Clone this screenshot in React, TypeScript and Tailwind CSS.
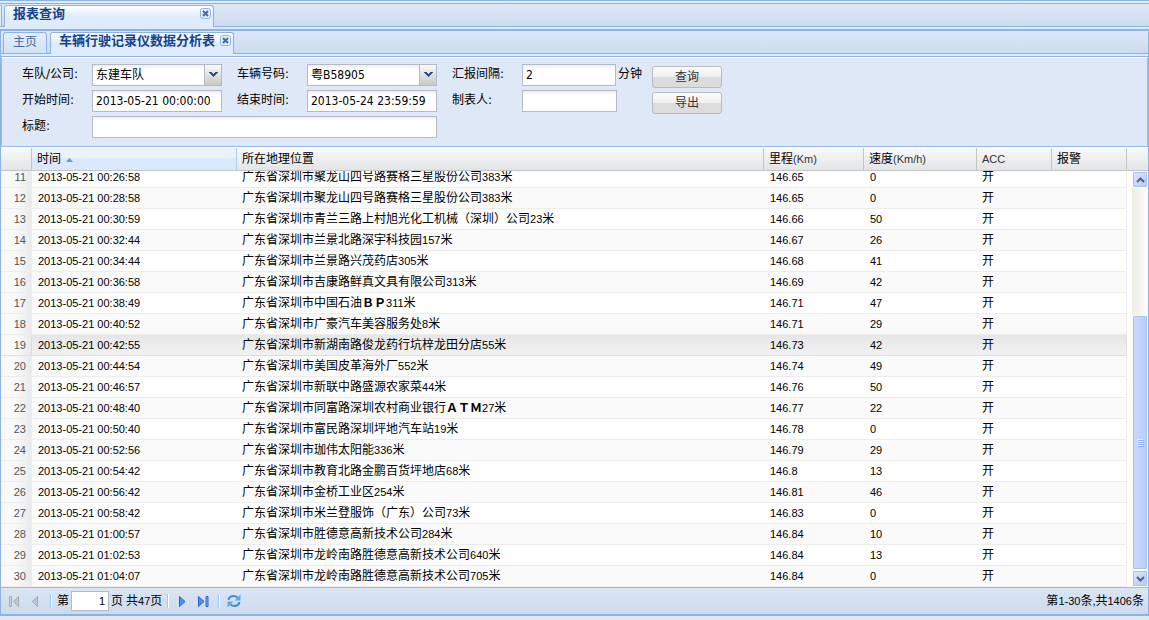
import { ReactNode } from "react";

type Row = { no: number; time: string; place: string; km: string; speed: number };

const DAY = "2013-05-21";

const rows: Row[] = [
  { no: 11, time: "00:26:58", place: "广东省深圳市聚龙山四号路赛格三星股份公司383米", km: "146.65", speed: 0 },
  { no: 12, time: "00:28:58", place: "广东省深圳市聚龙山四号路赛格三星股份公司383米", km: "146.65", speed: 0 },
  { no: 13, time: "00:30:59", place: "广东省深圳市青兰三路上村旭光化工机械（深圳）公司23米", km: "146.66", speed: 50 },
  { no: 14, time: "00:32:44", place: "广东省深圳市兰景北路深宇科技园157米", km: "146.67", speed: 26 },
  { no: 15, time: "00:34:44", place: "广东省深圳市兰景路兴茂药店305米", km: "146.68", speed: 41 },
  { no: 16, time: "00:36:58", place: "广东省深圳市吉康路鲜真文具有限公司313米", km: "146.69", speed: 42 },
  { no: 17, time: "00:38:49", place: "广东省深圳市中国石油ＢＰ311米", km: "146.71", speed: 47 },
  { no: 18, time: "00:40:52", place: "广东省深圳市广豪汽车美容服务处8米", km: "146.71", speed: 29 },
  { no: 19, time: "00:42:55", place: "广东省深圳市新湖南路俊龙药行坑梓龙田分店55米", km: "146.73", speed: 42 },
  { no: 20, time: "00:44:54", place: "广东省深圳市美国皮革海外厂552米", km: "146.74", speed: 49 },
  { no: 21, time: "00:46:57", place: "广东省深圳市新联中路盛源农家菜44米", km: "146.76", speed: 50 },
  { no: 22, time: "00:48:40", place: "广东省深圳市同富路深圳农村商业银行ＡＴＭ27米", km: "146.77", speed: 22 },
  { no: 23, time: "00:50:40", place: "广东省深圳市富民路深圳坪地汽车站19米", km: "146.78", speed: 0 },
  { no: 24, time: "00:52:56", place: "广东省深圳市珈伟太阳能336米", km: "146.79", speed: 29 },
  { no: 25, time: "00:54:42", place: "广东省深圳市教育北路金鹏百货坪地店68米", km: "146.8", speed: 13 },
  { no: 26, time: "00:56:42", place: "广东省深圳市金桥工业区254米", km: "146.81", speed: 46 },
  { no: 27, time: "00:58:42", place: "广东省深圳市米兰登服饰（广东）公司73米", km: "146.83", speed: 0 },
  { no: 28, time: "01:00:57", place: "广东省深圳市胜德意高新技术公司284米", km: "146.84", speed: 10 },
  { no: 29, time: "01:02:53", place: "广东省深圳市龙岭南路胜德意高新技术公司640米", km: "146.84", speed: 13 },
  { no: 30, time: "01:04:07", place: "广东省深圳市龙岭南路胜德意高新技术公司705米", km: "146.84", speed: 0 },
];

const HOVERED = 19;

const field =
  "h-[22px] border border-[#b5b8c8] bg-white bg-linear-to-b from-[#eceeee] to-white to-20% px-[3px] font-['DejaVu_Sans_Condensed','Noto_Sans_CJK_SC',sans-serif] text-[12px] text-black outline-none";

// Latin letters and digits are set one pixel smaller than the Chinese text
function Mixed({ text }: { text: string }) {
  return (
    <>
      {text.split(/([\x20-\x7e]+)/).map((part, i) =>
        i % 2 ? (
          <span key={i} className="text-[11px]">
            {part}
          </span>
        ) : (
          part.split(/([Ａ-Ｚ]+)/).map((p, j) => (j % 2 ? <b key={j}>{p}</b> : p))
        )
      )}
    </>
  );
}

function CloseIcon() {
  return (
    <svg viewBox="0 0 11 11" className="size-[11px]">
      <rect x="0.5" y="0.5" width="10" height="10" rx="2" fill="#e3eefb" stroke="#8fb3e3" />
      <path d="M3 3l5 5M8 3L3 8" stroke="#456a9f" strokeWidth="2" />
    </svg>
  );
}

function Combo({ id, value }: { id: string; value: string }) {
  return (
    <div className="relative">
      <select id={id} defaultValue={value} className={`${field} block w-full appearance-none`}>
        <option>{value}</option>
      </select>
      <span className="pointer-events-none absolute inset-y-0 right-0 flex w-[18px] items-center justify-center border border-[#b5b8c8] bg-linear-to-b from-[#fafafa] to-[#c8c8c8]">
        <svg viewBox="0 0 9 6" className="h-1.5 w-[9px]" shapeRendering="crispEdges">
          <path d="M0 0h3v1h1v1h1V1h1V0h3v1H8v1H7v1H6v1H5v1H4V4H3V3H2V2H1V1H0z" fill="#2d4f8e" />
        </svg>
      </span>
    </div>
  );
}

function Label({ id, indent, children }: { id: string; indent?: boolean; children: ReactNode }) {
  return (
    <label
      htmlFor={id}
      className={`pb-0.5 font-['DejaVu_Sans','Noto_Sans_CJK_SC',sans-serif] whitespace-nowrap ${indent ? "pl-[15px]" : ""}`}
    >
      {children}:
    </label>
  );
}

function ActionButton({ children }: { children: ReactNode }) {
  return (
    <button className="h-[22px] w-[70px] rounded-[3px] border border-[#bbb] bg-linear-to-b from-[#fbfbfb] from-0% via-[#efefef] via-50% to-[#dcdcdc] to-50% text-[12px] leading-4 text-[#333]">
      {children}
    </button>
  );
}

function Cols() {
  return (
    <colgroup>
      <col className="w-[31px]" />
      <col className="w-[205px]" />
      <col />
      <col className="w-[100px]" />
      <col className="w-[113px]" />
      <col className="w-[75px]" />
      <col className="w-[75px]" />
    </colgroup>
  );
}

function ScrollBar() {
  return (
    <div className="flex w-4 shrink-0 flex-col bg-linear-to-r from-[#edece4] to-[#fefefb]" aria-hidden="true">
      <span className="flex h-[17px] items-center justify-center rounded-[2px] border border-white bg-linear-to-br from-[#dbe6ff] to-[#b3c9f9] shadow-[inset_0_0_0_1px_#a9c0f2]">
        <svg viewBox="0 0 9 6" className="h-1.5 w-[9px]" fill="none" stroke="#4d6185" strokeWidth="2">
          <path d="M1 5l3.500-3.500L8 5" />
        </svg>
      </span>
      <span className="grow-[131]" />
      <span className="flex grow-[252] items-center justify-center rounded-[2px] border border-white bg-linear-to-r from-[#c9d8fd] to-[#b9cdfb] shadow-[inset_0_0_0_1px_#a9c0f2]">
        <svg viewBox="0 0 7 8" className="h-2 w-[7px]" shapeRendering="crispEdges">
          <path d="M0 0h6v1H0zM0 2h6v1H0zM0 4h6v1H0zM0 6h6v1H0z" fill="#eef4fe" />
          <path d="M1 1h6v1H1zM1 3h6v1H1zM1 5h6v1H1zM1 7h6v1H1z" fill="#8cb0f8" />
        </svg>
      </span>
      <span className="flex h-[17px] items-center justify-center rounded-[2px] border border-white bg-linear-to-br from-[#dbe6ff] to-[#b3c9f9] shadow-[inset_0_0_0_1px_#a9c0f2]">
        <svg viewBox="0 0 9 6" className="h-1.5 w-[9px]" fill="none" stroke="#4d6185" strokeWidth="2">
          <path d="M1 1l3.500 3.500L8 1" />
        </svg>
      </span>
    </div>
  );
}

function Divider() {
  return <span className="h-3.5 w-0.5 border-r border-l border-r-white border-l-[#98c8ff]" />;
}

const th = "border-r border-[#c5c5c5] px-[5px] text-left font-normal whitespace-nowrap";
const activeTab =
  "-mb-px flex items-start rounded-t-[3px] border border-b-0 border-[#8db2e3] bg-linear-to-b from-white to-[#deecfd] to-50% pl-2";

export default function App() {
  return (
    <div className="flex h-screen flex-col overflow-hidden bg-[#dfe8f6] font-['Liberation_Sans','Noto_Sans_CJK_SC',sans-serif] text-[12px] leading-4 text-black">
      <div className="h-1 shrink-0 border-y border-[#8db2e3] bg-[#deecfd]" />
      <div
        role="tablist"
        className="flex h-[23px] shrink-0 items-end gap-0.5 border-b border-[#8db2e3] bg-linear-to-b from-[#dde8f7] to-[#cbdbef]"
      >
        <span className="h-[21px] w-0.5 rounded-tr-[3px] border-t border-r border-[#8db2e3] bg-[#e3eefb]" />
        <div className={`${activeTab} h-[22px] w-[210px] justify-between pr-0.5`}>
          <button role="tab" aria-selected="true" className="text-[13px] leading-4 font-bold text-[#15428b]">
            报表查询
          </button>
          <button aria-label="关闭报表查询" className="mt-0.5">
            <CloseIcon />
          </button>
        </div>
      </div>
      <div className="h-0.5 shrink-0 bg-[#deecfd]" />

      <div className="mb-1 flex min-h-0 grow flex-col border-x border-y-2 border-[#8db2e3]">
        <div
          role="tablist"
          className="flex h-[23px] shrink-0 items-end gap-[3px] border-b border-[#8db2e3] bg-linear-to-b from-[#dde8f7] to-[#cbdbef] pl-0.5"
        >
          <button
            role="tab"
            aria-selected="false"
            className="h-[21px] rounded-t-[3px] border border-b-0 border-[#8db2e3] bg-linear-to-b from-[#e3eefb] to-[#d3e2f5] px-[9px] pb-0.5 text-[12px] leading-4 text-[#416aa3]"
          >
            主页
          </button>
          <div className={`${activeTab} h-[22px] gap-[5px] pr-0.5`}>
            <button role="tab" aria-selected="true" className="text-[13px] leading-4 font-bold text-[#15428b]">
              车辆行驶记录仪数据分析表
            </button>
            <button aria-label="关闭车辆行驶记录仪数据分析表" className="mt-0.5">
              <CloseIcon />
            </button>
          </div>
        </div>
        <div className="h-[3px] shrink-0 border-b border-[#8db2e3] bg-[#deecfd]" />

        <form
          onSubmit={(e) => e.preventDefault()}
          className="flex shrink-0 gap-[35px] border border-[#99bce8] border-t-white bg-[#dfe8f6] px-5 pt-[6px] pb-2"
        >
          <div className="grid grid-cols-[70px_130px_85px_130px_85px_95px] items-center gap-y-1">
            <Label id="fleet">车队/公司</Label>
            <Combo id="fleet" value="东建车队" />
            <Label id="plate" indent>
              车辆号码
            </Label>
            <Combo id="plate" value="粤B58905" />
            <Label id="interval" indent>
              汇报间隔
            </Label>
            <div className="relative">
              <input id="interval" defaultValue="2" className={`${field} block w-[94px]`} />
              <span className="absolute top-0.5 left-24 whitespace-nowrap">分钟</span>
            </div>

            <Label id="start">开始时间</Label>
            <input id="start" defaultValue="2013-05-21 00:00:00" className={`${field} w-full`} />
            <Label id="end" indent>
              结束时间
            </Label>
            <input id="end" defaultValue="2013-05-24 23:59:59" className={`${field} w-full`} />
            <Label id="author" indent>
              制表人
            </Label>
            <input id="author" className={`${field} w-full`} />

            <Label id="title">标题</Label>
            <input id="title" className={`${field} col-span-3 w-full`} />
          </div>
          <div className="flex flex-col gap-1 pt-0.5">
            <ActionButton>查询</ActionButton>
            <ActionButton>导出</ActionButton>
          </div>
        </form>

        <div className="flex h-6 shrink-0 border-t border-b border-t-white border-b-[#c5c5c5] bg-linear-to-b from-[#f9f9f9] to-[#e3e4e6]">
          <table className="h-full grow table-fixed border-separate border-spacing-0">
            <Cols />
            <thead>
              <tr>
                <th className={th} aria-label="序号" />
                <th className="border-r border-[#aaccf6] bg-linear-to-b from-[#ebf3fd] from-40% to-[#d9e8fb] to-50% px-[5px] text-left font-normal">
                  时间
                  <svg viewBox="0 0 7 4" className="ml-[5px] inline h-1 w-[7px]">
                    <path d="M3.500 0L7 4H0z" fill="#6a97cf" />
                  </svg>
                </th>
                <th className={th}>所在地理位置</th>
                <th className={th}>
                  里程<span className="text-[11px] text-[#333]">(Km)</span>
                </th>
                <th className={th}>
                  速度<span className="text-[11px] text-[#333]">(Km/h)</span>
                </th>
                <th className={`${th} text-[11px] text-[#333]`}>ACC</th>
                <th className={th}>报警</th>
              </tr>
            </thead>
          </table>
          <span className="w-[21px] shrink-0" />
        </div>

        <div className="flex min-h-0 grow bg-white">
          <div className="flex min-w-0 grow flex-col justify-end overflow-hidden">
            <table className="w-full shrink-0 table-fixed border-separate border-spacing-0">
              <Cols />
              <tbody>
                {rows.map((row) => (
                  <tr
                    key={row.no}
                    className={
                      row.no === HOVERED
                        ? "h-[21px] bg-linear-to-b from-[#e6e6e6] to-[#f2f2f2] *:border-b *:border-[#ddd]"
                        : "h-[21px] even:bg-[#fafafa] *:border-b *:border-[#ededed]"
                    }
                  >
                    <td className="border-r border-r-[#d4d4d4] bg-linear-to-r from-[#f9f9f9] from-50% to-[#e9eaec] pr-[5px] text-right text-[11px] text-[#555]">
                      {row.no}
                    </td>
                    <td className="px-[6px] text-[11px]">
                      {DAY} {row.time}
                    </td>
                    <td className="px-[5px] whitespace-nowrap">
                      <Mixed text={row.place} />
                    </td>
                    <td className="px-[6px] text-[11px]">{row.km}</td>
                    <td className="px-[6px] text-[11px]">{row.speed}</td>
                    <td className="px-[5px]">开</td>
                    <td className="border-r border-r-[#ededed]" />
                  </tr>
                ))}
              </tbody>
            </table>
          </div>
          <span className="w-[5px] shrink-0" />
          <ScrollBar />
        </div>

        <div className="flex h-[27px] shrink-0 items-center border-t border-[#99bce8] bg-linear-to-b from-[#dbe6f4] to-[#cbdaed] pr-1 pl-2">
          <button aria-label="首页" className="mr-3">
            <svg viewBox="0 0 10 11" className="h-[11px] w-2.5">
              <path d="M0.500 0.500h2v10h-2z" fill="#d6d6d6" stroke="#a5a9b0" />
              <path d="M9.500 0.500v10l-5-5z" fill="#c3c6cb" stroke="#a5a9b0" />
            </svg>
          </button>
          <button aria-label="上一页" className="mr-3">
            <svg viewBox="0 0 7 11" className="h-[11px] w-[7px]">
              <path d="M6.500 0.500v10l-5-5z" fill="#c3c6cb" stroke="#a5a9b0" />
            </svg>
          </button>
          <Divider />
          <label htmlFor="page" className="ml-[5px] pr-0.5">
            第
          </label>
          <input
            id="page"
            defaultValue="1"
            className="h-5 w-[38px] border border-[#b5b8c8] bg-white px-[3px] text-right text-[11px] outline-none"
          />
          <span className="mr-[5px] ml-0.5">
            <Mixed text="页 共47页" />
          </span>
          <Divider />
          <button aria-label="下一页" className="mr-3 ml-2.5">
            <svg viewBox="0 0 7 11" className="h-[11px] w-[7px]">
              <path d="M0.500 0.500v10l5.500-5z" fill="#4f8df0" stroke="#2b62c9" />
            </svg>
          </button>
          <button aria-label="末页" className="mr-[9px]">
            <svg viewBox="0 0 11 11" className="size-[11px]">
              <path d="M0.500 0.500v10l5.500-5z" fill="#4f8df0" stroke="#2b62c9" />
              <path d="M8 0.500h2v10H8z" fill="#7fb0fa" stroke="#2b62c9" />
            </svg>
          </button>
          <Divider />
          <button aria-label="刷新" className="ml-[7px]">
            <svg viewBox="0 0 14 14" className="size-3.5" fill="none" stroke="#3f8fd6" strokeWidth="2">
              <path d="M1.500 6C2 2.500 7 0.500 10.500 3.500" />
              <path d="M12.500 8C12 11.500 7 13.500 3.500 10.500" />
              <path d="M13.500 0.500v6H7.500z" fill="#5fa8e6" stroke="none" />
              <path d="M0.500 13.500v-6h6z" fill="#5fa8e6" stroke="none" />
            </svg>
          </button>
          <span className="ml-auto">
            <Mixed text="第1-30条,共1406条" />
          </span>
        </div>
      </div>
    </div>
  );
}
